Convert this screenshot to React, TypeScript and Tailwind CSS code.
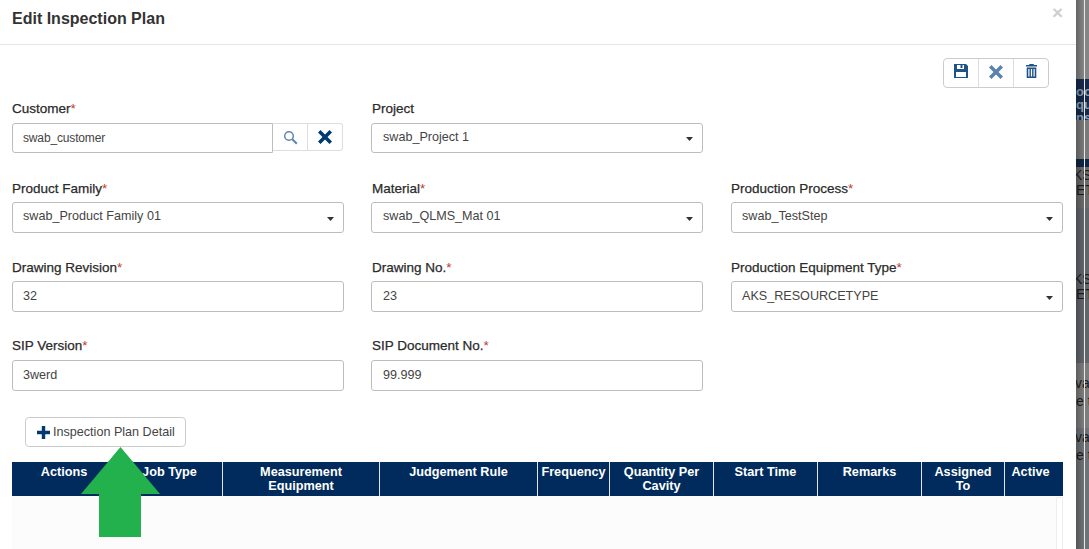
function Floppy() {
  return (
    <svg width="14" height="14" viewBox="0 0 14 14" aria-hidden="true">
      <path fillRule="evenodd" fill="#1f5288" d="M0 0h12l2 2v12H0zM3 1v4h7V1h-1.500v3h-2V1zM2 8v5h10V8z" />
    </svg>
  );
}

function Cross({ size = 14, color = "#5b82ab" }: { size?: number; color?: string }) {
  return (
    <svg width={size} height={size} viewBox="0 0 14 14" aria-hidden="true">
      <path fill={color} d="M2.500 0 7 4.500 11.500 0 14 2.500 9.500 7 14 11.500 11.500 14 7 9.500 2.500 14 0 11.500 4.500 7 0 2.500z" />
    </svg>
  );
}

function Trash() {
  return (
    <svg width="11" height="14" viewBox="0 0 11 14" aria-hidden="true">
      <path fill="#1f5288" d="M3.500 0h4l.5 1h3v1.500H0V1h3zM.7 3.500h9.600V14H.7zM2.300 5v7.500h1.200V5zM4.900 5v7.500h1.200V5zM7.500 5v7.500h1.200V5z" />
    </svg>
  );
}

function Plus() {
  return (
    <svg width="13" height="13" viewBox="0 0 13 13" aria-hidden="true">
      <path fill="#003a70" d="M4.800 0h3.400v4.800H13v3.400H8.200V13H4.800V8.200H0V4.800h4.800z" />
    </svg>
  );
}

function Search() {
  return (
    <svg width="15" height="15" viewBox="0 0 15 15" aria-hidden="true" fill="none" stroke="#5f86ae">
      <circle cx="6" cy="6" r="4.300" strokeWidth="1.500" />
      <path d="m9.300 9.300 4.500 4.500" strokeWidth="2" />
    </svg>
  );
}

function Caret() {
  return (
    <svg className="translate-y-px" width="7" height="4" viewBox="0 0 7 4" aria-hidden="true">
      <path fill="#333" d="M0 0h7L3.500 4z" />
    </svg>
  );
}

function Label({ text, required, up, mid }: { text: string; required?: boolean; up?: boolean; mid?: boolean }) {
  return (
    <div className={`h-[15px] text-[13.5px] leading-[15px] text-[#2b2b2b] [-webkit-text-stroke:0.25px_#2b2b2b] ${up ? "-translate-y-px" : ""} ${mid ? "pl-px" : ""}`}>
      {text}
      {required && <span className="text-[#c0392b] [-webkit-text-stroke:0]">*</span>}
    </div>
  );
}

function Field({
  label,
  required,
  value,
  select,
  high,
  up,
  mid,
  short,
}: {
  label: string;
  required?: boolean;
  value: string;
  select?: boolean;
  high?: boolean;
  up?: boolean;
  mid?: boolean;
  short?: boolean;
}) {
  return (
    <div className="flex flex-col">
      <Label text={label} required={required} up={up} mid={mid} />
      <div className={`mt-[6px] flex ${short ? "mb-px h-[30px]" : "h-[31px]"} items-center justify-between rounded-[3px] border border-[#bdbdbd] bg-white pr-[9px] ${mid ? "pl-[11px]" : "pl-[10px]"} text-[12.6px] text-[#444]`}>
        <span className={high ? "-translate-y-px" : ""}>{value}</span>
        {select && <Caret />}
      </div>
    </div>
  );
}

const columns: { title: string; cls: string }[] = [
  { title: "Actions", cls: "w-[105px] px-[3px]" },
  { title: "Job Type", cls: "w-[106px] px-[3px]" },
  { title: "Measurement Equipment", cls: "w-[157px] px-[30px]" },
  { title: "Judgement Rule", cls: "w-[158px] px-[3px]" },
  { title: "Frequency", cls: "w-[72px] px-[2px]" },
  { title: "Quantity Per Cavity", cls: "w-[104px] px-[3px]" },
  { title: "Start Time", cls: "w-[104px] px-[3px]" },
  { title: "Remarks", cls: "w-[104px] px-[3px]" },
  { title: "Assigned To", cls: "w-[83px] px-[10px]" },
  { title: "Active", cls: "flex-1 pr-[7px]" },
];

export default function App() {
  return (
    <div className="flex h-[549px] w-[1089px] overflow-hidden bg-white font-['Liberation_Sans',Arial,sans-serif]">
      <div className="relative flex w-[1076px] shrink-0 flex-col">
        <header className="flex h-[45px] shrink-0 items-start justify-between border-b border-[#e5e5e5] pr-[13px] pl-[12px]">
          <h1 className="mt-[10px] text-[16px] leading-[18px] font-bold text-[#333]">Edit Inspection Plan</h1>
          <span className="mt-[5px] text-[19px] leading-[15px] font-bold text-[#cfcfcf]">×</span>
        </header>

        <div className="flex justify-end pt-[13px] pr-[27px]">
          <div className="flex h-[30px] rounded-[4px] border border-[#ccc]">
            <div className="flex w-[35px] items-start justify-center border-r border-[#ddd] pt-[5px]"><Floppy /></div>
            <div className="flex w-[35px] items-start justify-center border-r border-[#ddd] pt-[6px]"><Cross /></div>
            <div className="flex w-[34px] items-start justify-center pt-[5px]"><Trash /></div>
          </div>
        </div>

        <div className="mt-[14px] grid grid-cols-[332px_332px_333px] gap-x-[27px] gap-y-[27px] pl-[12px]">
          <div className="flex flex-col">
            <Label text="Customer" required up />
            <div className="mt-[6px] flex h-[30px]">
              <div className="flex w-[261px] items-center rounded-l-[3px] border border-[#bdbdbd] pl-[10px] text-[12px] tracking-[-0.15px] text-[#444]">swab_customer</div>
              <div className="flex h-[28px] w-[35px] items-center justify-center border-y border-r border-[#ddd]"><Search /></div>
              <div className="flex h-[28px] w-[35px] items-center justify-center rounded-r-[3px] border-y border-r border-[#ddd]"><Cross color="#003a70" /></div>
            </div>
          </div>
          <Field label="Project" value="swab_Project 1" select high up mid short />
          <div />
          <Field label="Product Family" required value="swab_Product Family 01" select high />
          <Field label="Material" required value="swab_QLMS_Mat 01" select high mid />
          <div className="ml-px">
            <Field label="Production Process" required value="swab_TestStep" select high />
          </div>
          <Field label="Drawing Revision" required value="32" />
          <Field label="Drawing No." required value="23" mid />
          <div className="ml-px">
            <Field label="Production Equipment Type" required value="AKS_RESOURCETYPE" select />
          </div>
          <Field label="SIP Version" required value="3werd" up />
          <Field label="SIP Document No." required value="99.999" up mid />
        </div>

        <div className="mt-[26px] ml-[25px] flex h-[30px] w-[161px] items-center gap-[3px] rounded-[4px] border border-[#ccc] pl-[11px] text-[12.6px] text-[#444]">
          <Plus />
          <span>Inspection Plan Detail</span>
        </div>

        <div className="mt-[15px] ml-[12px] flex w-[1051px] flex-1 flex-col">
          <div className="flex h-[34px] shrink-0 bg-[#002b5c]">
            {columns.map((c, i) => (
              <div
                key={c.title}
                className={`${c.cls} ${i < columns.length - 1 ? "border-r border-[#e5e5e5]" : ""} pt-[3px] text-center text-[12.7px] leading-[14px] font-bold text-white`}
              >
                {c.title}
              </div>
            ))}
          </div>
          <div className="flex flex-1 justify-end bg-[#fcfcfc]">
            <div className="mt-px w-[7px] rounded-t-[2px] border-x border-t border-[#eee] bg-white" />
          </div>
        </div>

        <svg className="absolute top-[447px] left-[81px]" width="80" height="91" viewBox="0 0 80 91" aria-hidden="true">
          <path fill="#22b14c" d="M39.500 0 79 47H60v43H18V47H0z" />
        </svg>
      </div>

      <div className="relative flex w-[13px] shrink-0 flex-col overflow-hidden whitespace-nowrap text-[14px] leading-[15px] text-[#1c1c1c]">
        <div className="h-[79px] bg-[#858585]" />
        <div className="h-[41px] bg-[#17294a] pt-[6px] text-[13px] leading-[13px] font-bold text-[#8fa3b8]">oo<br />qu<br />ns</div>
        <div className="h-[39px] bg-[#7a7a7a]" />
        <div className="h-[8px] bg-[#0f2444]" />
        <div className="h-[41px] bg-[#6b6b6b] pt-[1px] -indent-[3px]">KS<br />ET</div>
        <div className="h-[155px] bg-[#62666b] pt-[64px] -indent-[3px]">KS<br />ET</div>
        <div className="h-[65px] bg-[#7d7d7d] pt-[11px] -indent-[1px] leading-[18px]">va<br />e t</div>
        <div className="flex-1 bg-[#6f7276] -indent-[1px] leading-[18px]">va<br />e t</div>
        <div className="absolute inset-y-0 left-0 w-[8px] bg-gradient-to-r from-black/25 to-transparent" />
        <div className="absolute inset-y-0 left-[8px] w-px bg-[#e8e8e8]" />
      </div>
    </div>
  );
}
